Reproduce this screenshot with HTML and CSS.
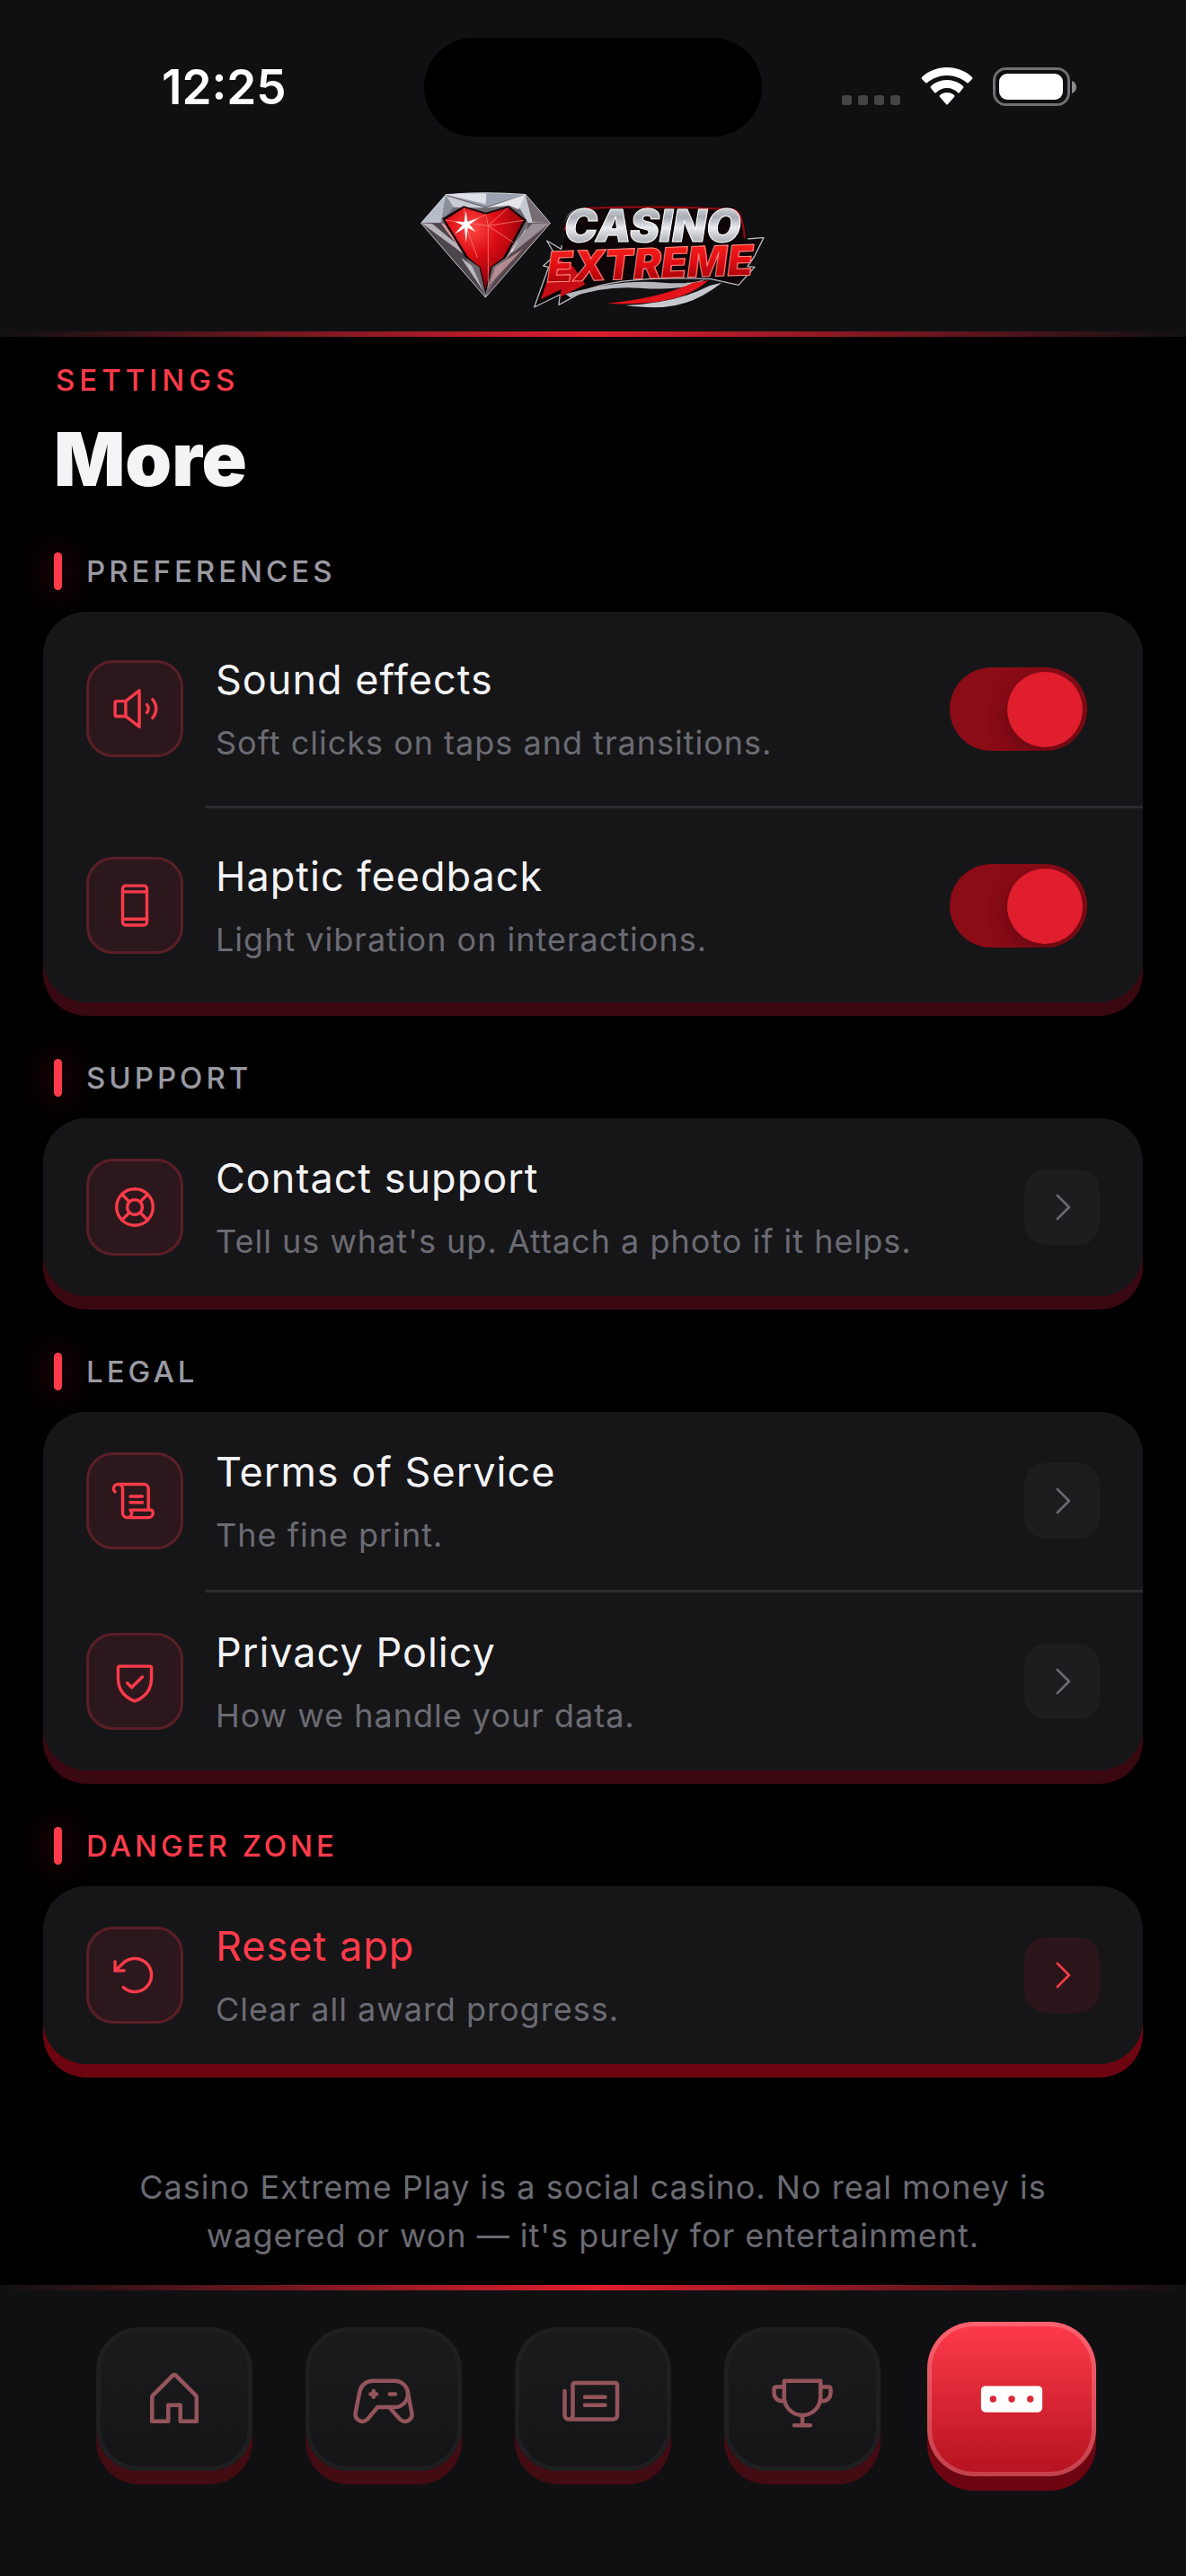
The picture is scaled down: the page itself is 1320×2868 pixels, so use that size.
FILE: index.html
```html
<!DOCTYPE html>
<html lang="en">
<head>
	<meta charset="utf-8" />
	<meta name="viewport" content="width=device-width, initial-scale=1.0" />
	<title>More</title>
	<link rel="stylesheet" href="styles.css">
</head>
<body>
	<header class="header">
		<div class="status">
			<span class="time">12:25</span>
			<span class="island"></span>
			<div class="statusIcons">
				<svg width="66" height="44" viewBox="0 0 66 44" fill="#444446">
					<rect x="0" y="31" width="11" height="11" rx="3" />
					<rect x="18" y="31" width="11" height="11" rx="3" />
					<rect x="36" y="31" width="11" height="11" rx="3" />
					<rect x="54" y="31" width="11" height="11" rx="3" />
				</svg>
				<svg width="58" height="44" viewBox="0 0 58 44" fill="#fff">
					<path d="M29,0C40,0 50,4 57,11Q58,12 57,13L53,17Q52,18 51,17C45,12 37,9 29,9S13,12 7,17Q6,18 5,17L1,13Q0,12 1,11C8,4 18,0 29,0Z" />
					<path d="M29,14C36,14 43,17 47,21Q48,22 47,23L43,28Q42,29 41,28C38,25 34,23 29,23S20,25 17,28Q16,29 15,28L11,23Q10,22 11,21C15,17 22,14 29,14Z" />
					<path d="M29,28C32,28 35,29 37,31Q38,32 37,33L30,41Q29,42 28,41L21,33Q20,32 21,31C23,29 26,28 29,28Z" />
				</svg>
				<svg width="94" height="44" viewBox="0 0 94 44">
					<rect x="1.5" y="1.5" width="83" height="40" rx="13" fill="none" stroke="#707072" stroke-width="3" />
					<rect x="7" y="7" width="71" height="29" rx="9" fill="#fff" />
					<path d="M88,15q5,2 5,7t-5,7z" fill="#8a8a8c" />
				</svg>
			</div>
		</div>
		<svg class="logo" viewBox="90 72 1152 396" role="img" aria-label="Casino Extreme">
			<defs>
				<linearGradient id="silver" x1="0" y1="0" x2="0" y2="1">
					<stop offset="0" stop-color="#f4f5f8" />
					<stop offset=".35" stop-color="#a9acb4" />
					<stop offset=".55" stop-color="#e9ebef" />
					<stop offset="1" stop-color="#80838c" />
				</linearGradient>
				<linearGradient id="ruby" x1="0" y1="0" x2="0" y2="1">
					<stop offset="0" stop-color="#ff2a22" />
					<stop offset=".5" stop-color="#e00d12" />
					<stop offset="1" stop-color="#8e0008" />
				</linearGradient>
				<radialGradient id="heart" cx=".35" cy=".25" r=".8">
					<stop offset="0" stop-color="#ff4a44" />
					<stop offset=".4" stop-color="#dd0d14" />
					<stop offset="1" stop-color="#7c0008" />
				</radialGradient>
			</defs>
			<!-- diamond -->
			<path d="M93,175L176,80Q308,70 440,80L522,175L307,422Z" fill="#6d6870" stroke="#e6e6ea" stroke-width="4" stroke-linejoin="round" />
			<path d="M176,80L93,175H158Z" fill="#b6bcc8" />
			<path d="M176,80L158,175L200,122Z" fill="#8a8f9a" />
			<path d="M176,80Q308,70 440,80L308,120Z" fill="#9ba3b2" />
			<path d="M176,80Q240,74 310,76L308,112Z" fill="#dde0e6" />
			<path d="M176,84L306,124L280,124L200,122Z" fill="#c9ccd4" />
			<path d="M440,80L522,175H450L418,120Z" fill="#c4c8d0" />
			<path d="M440,80L464,172L522,175Z" fill="#786c74" />
			<path d="M440,80L310,124L386,116L418,130Z" fill="#e4e6ea" />
			<path d="M93,175H158L232,275L307,422Z" fill="#4c454c" />
			<path d="M93,175L250,290L232,262L130,178Z" fill="#b7b3ba" />
			<path d="M158,175L170,180L232,268L222,262Z" fill="#e99aa0" />
			<path d="M225,290L262,318L298,400Z" fill="#bdb9c0" />
			<path d="M522,175H450L392,268L307,422Z" fill="#57484f" />
			<path d="M522,175L396,275L384,262L462,178Z" fill="#9a8f97" />
			<path d="M450,178L440,200L372,298L396,270Z" fill="#f3f3f5" />
			<path d="M432,262L340,322L318,384Z" fill="#b48b92" />
			<path d="M162,160L234,118L308,140L384,118L444,165L375,290L330,322L307,412L286,322L240,290Z" fill="#160508" />
			<path d="M172,165L236,124L308,146L382,124L434,166L366,290L324,322L307,396L290,322L250,290Z" fill="url(#heart)" />
			<g fill="none" stroke="#ff7d78" stroke-width="3" opacity=".8">
				<path d="M172,165L316,184L434,166" />
				<path d="M236,124L240,180L308,146L316,184L382,124" />
				<path d="M240,180L280,290M316,184V390M316,184L400,240" />
			</g>
			<path d="M242,134L247,170L284,158L254,180L274,204L248,191L242,240L237,192L204,212L230,182L204,170L236,171Z" fill="#fff" />
			<!-- backing plate of the wordmark -->
			<path d="M570,190Q575,130 640,122Q900,112 1140,126Q1175,130 1180,228L1236,224L1204,288L1182,320L1206,322L1152,382L1060,362Q760,350 640,400L552,448L556,414L470,456L518,322L500,318L540,282L512,234L560,262Z" fill="#0d0507" stroke="#b9bac0" stroke-width="4" stroke-linejoin="round" />
			<path d="M562,250Q562,134 644,122Q900,112 1140,126Q1176,132 1178,232" fill="none" stroke="#101012" stroke-width="10" />
			<path d="M572,200Q582,134 644,126Q900,116 1136,130Q1166,136 1172,226" fill="none" stroke="#9c0810" stroke-width="6" />
			<path d="M574,412Q760,360 900,374Q990,380 1040,364Q980,404 820,392Q700,384 590,424Z" fill="#b5b6bb" />
			<path d="M712,444Q900,424 1000,374L1052,366Q980,430 860,440Q780,448 712,444Z" fill="#e3141a" />
			<path d="M774,450Q940,444 1056,384L1096,374Q1000,450 900,456Q830,458 774,450Z" fill="#c8c9ce" />
			<path d="M540,290L492,430L560,396L556,422L640,380L600,320Z" fill="#c90d14" />
			<text class="word silver" x="570" y="236">CASINO</text>
			<text class="word ruby" x="514" y="372" transform="rotate(-2 514 372)">EXTREME</text>
		</svg>
	</header>

	<main class="main">
		<p class="eyebrow">SETTINGS</p>
		<h1 class="pageTitle">More</h1>

		<section class="section">
			<h2 class="label">PREFERENCES</h2>
			<div class="card">
				<label class="row tall" for="sound">
					<span class="iconBox">
						<svg class="icon" viewBox="0 0 256 256">
							<path d="M80,168H32a8,8,0,0,1-8-8V96a8,8,0,0,1,8-8H80l72-56V224Z" />
							<path d="M80,88v80M192,107a32,32,0,0,1,0,42M222,80a72,72,0,0,1,0,96" />
						</svg>
					</span>
					<span class="text">
						<span class="name">Sound effects</span>
						<span class="des">Soft clicks on taps and transitions.</span>
					</span>
					<input class="switch" type="checkbox" id="sound" checked />
				</label>
				<label class="row tall" for="haptic">
					<span class="iconBox">
						<svg class="icon" viewBox="0 0 256 256">
							<rect x="64" y="24" width="128" height="208" rx="16" />
							<path d="M64,56H192M64,200H192" />
						</svg>
					</span>
					<span class="text">
						<span class="name">Haptic feedback</span>
						<span class="des">Light vibration on interactions.</span>
					</span>
					<input class="switch" type="checkbox" id="haptic" checked />
				</label>
			</div>
		</section>

		<section class="section">
			<h2 class="label">SUPPORT</h2>
			<div class="card">
				<a class="row" href="#support">
					<span class="iconBox">
						<svg class="icon" viewBox="0 0 256 256">
							<circle cx="128" cy="128" r="96" />
							<circle cx="128" cy="128" r="40" />
							<path d="M60,60l40,40M196,60l-40,40M60,196l40-40M196,196l-40-40" />
						</svg>
					</span>
					<span class="text">
						<span class="name">Contact support</span>
						<span class="des">Tell us what's up. Attach a photo if it helps.</span>
					</span>
					<span class="arrow"><svg viewBox="0 0 256 256"><path d="M96,48l80,80l-80,80" /></svg></span>
				</a>
			</div>
		</section>

		<section class="section">
			<h2 class="label">LEGAL</h2>
			<div class="card">
				<a class="row" href="#terms">
					<span class="iconBox">
						<svg class="icon solid" viewBox="0 0 256 256">
							<path d="M96,104a8,8,0,0,1,8-8h64a8,8,0,0,1,0,16H104A8,8,0,0,1,96,104Zm8,40h64a8,8,0,0,0,0-16H104a8,8,0,0,0,0,16Zm128,48a32,32,0,0,1-32,32H88a32,32,0,0,1-32-32V64a16,16,0,0,0-32,0c0,5.74,4.83,9.62,4.88,9.66h0A8,8,0,0,1,24,88a7.89,7.89,0,0,1-4.79-1.61h0C18.05,85.54,8,77.61,8,64A32,32,0,0,1,40,32H176a32,32,0,0,1,32,32V168h8a8,8,0,0,1,4.8,1.6C222,170.46,232,178.39,232,192ZM96.26,173.48A8.07,8.07,0,0,1,104,168h88V64a16,16,0,0,0-16-16H67.69A31.71,31.71,0,0,1,72,64V192a16,16,0,0,0,32,0c0-5.74-4.83-9.62-4.88-9.66A7.82,7.82,0,0,1,96.26,173.48ZM216,192a12.58,12.58,0,0,0-3.23-8h-94a26.92,26.92,0,0,1,1.21,8,31.82,31.82,0,0,1-4.29,16H200A16,16,0,0,0,216,192Z" />
						</svg>
					</span>
					<span class="text">
						<span class="name">Terms of Service</span>
						<span class="des">The fine print.</span>
					</span>
					<span class="arrow"><svg viewBox="0 0 256 256"><path d="M96,48l80,80l-80,80" /></svg></span>
				</a>
				<a class="row" href="#privacy">
					<span class="iconBox">
						<svg class="icon" viewBox="0 0 256 256">
							<path d="M216,112V56a8,8,0,0,0-8-8H48a8,8,0,0,0-8,8v56c0,96,88,120,88,120S216,208,216,112Z" />
							<path d="M88,136l24,24l56-56" />
						</svg>
					</span>
					<span class="text">
						<span class="name">Privacy Policy</span>
						<span class="des">How we handle your data.</span>
					</span>
					<span class="arrow"><svg viewBox="0 0 256 256"><path d="M96,48l80,80l-80,80" /></svg></span>
				</a>
			</div>
		</section>

		<section class="section danger">
			<h2 class="label">DANGER ZONE</h2>
			<div class="card">
				<button class="row" type="button">
					<span class="iconBox">
						<svg class="icon" viewBox="0 0 256 256">
							<path d="M72,104H24V56" />
							<path d="M67.6,192A88,88,0,1,0,65.8,65.8L24,104" />
						</svg>
					</span>
					<span class="text">
						<span class="name">Reset app</span>
						<span class="des">Clear all award progress.</span>
					</span>
					<span class="arrow"><svg viewBox="0 0 256 256"><path d="M96,48l80,80l-80,80" /></svg></span>
				</button>
			</div>
		</section>

		<p class="note">Casino Extreme Play is a social casino. No real money is wagered or won — it's purely for entertainment.</p>
	</main>

	<nav class="nav">
		<a class="tab" href="#home" aria-label="Home">
			<span class="key">
				<svg viewBox="0 0 256 256">
					<path d="M104,216V152h48v64h64V120a8,8,0,0,0-2.3-5.7l-80-80a8,8,0,0,0-11.4,0l-80,80A8,8,0,0,0,40,120v96Z" />
				</svg>
			</span>
		</a>
		<a class="tab" href="#games" aria-label="Games">
			<span class="key">
				<svg viewBox="0 0 256 256">
					<path d="M172,56H84a52,52,0,0,0-51,43L16.4,183.8A28,28,0,0,0,63.8,208L104,160H172A52,52,0,0,0,172,56Z" />
					<path d="M223.2,99L239.6,183.8A28,28,0,0,1,192.2,208L150,160M152,108h22M76,108h24M88,96v24" />
				</svg>
			</span>
		</a>
		<a class="tab" href="#news" aria-label="News">
			<span class="key">
				<svg viewBox="0 0 256 256">
					<path d="M32,208a16,16,0,0,0,16-16V72a8,8,0,0,1,8-8H216a8,8,0,0,1,8,8V192a16,16,0,0,1-16,16H32a16,16,0,0,1-16-16V96" />
					<path d="M96,120h80M96,152h80" />
				</svg>
			</span>
		</a>
		<a class="tab" href="#awards" aria-label="Awards">
			<span class="key">
				<svg viewBox="0 0 256 256">
					<path d="M56,56H200v62c0,42-32,74-72,74s-72-32-72-74Z" />
					<path d="M198,136H208a32,32,0,0,0,32-32V88a8,8,0,0,0-8-8H200M58,136H48a32,32,0,0,1-32-32V88a8,8,0,0,1,8-8H56M128,192v40M96,232h64" />
				</svg>
			</span>
		</a>
		<a class="tab active" href="#more" aria-label="More">
			<span class="key">
				<svg viewBox="0 0 256 256">
					<path d="M224,80H32A16,16,0,0,0,16,96v64a16,16,0,0,0,16,16H224a16,16,0,0,0,16-16V96A16,16,0,0,0,224,80ZM60,140a12,12,0,1,1,12-12A12,12,0,0,1,60,140Zm68,0a12,12,0,1,1,12-12A12,12,0,0,1,128,140Zm68,0a12,12,0,1,1,12-12A12,12,0,0,1,196,140Z" />
				</svg>
			</span>
		</a>
	</nav>
</body>
</html>
```
FILE: styles.css
```css
*{
	margin: 0;
	padding: 0;
	box-sizing: border-box;
}
body{
	min-height: 100vh;
	display: flex;
	flex-direction: column;
	background: #000000;
	color: #f4f4f6;
	font-family: Inter, "Liberation Sans", sans-serif;
}
svg{
	display: block;
	flex: none;
}
a{
	color: inherit;
	text-decoration: none;
}

/* header */
.header{
	background: #101012;
	padding-top: 42px;
}
.header::after,
.nav::before{
	content: '';
	display: block;
	height: 6px;
	background: linear-gradient(90deg, rgba(224,30,46,0), #e01e2e 50%, rgba(224,30,46,0));
}
.status{
	display: grid;
	grid-template-columns: 1fr 376px 1fr;
	align-items: center;
}
.time{
	padding-left: 180px;
	font-size: 53px;
	line-height: 60px;
	font-weight: 600;
	color: #ffffff;
}
.island{
	height: 110px;
	border-radius: 55px;
	background: #000000;
}
.statusIcons{
	display: flex;
	justify-content: flex-end;
	gap: 22px;
	padding-right: 121px;
}
.logo{
	width: 384px;
	height: 132px;
	margin: 62px auto 23px;
}
.word{
	font-family: Inter, "Liberation Sans", sans-serif;
	font-weight: 900;
	font-style: italic;
	stroke-width: 3px;
}
.silver{
	font-size: 148px;
	fill: url(#silver);
	stroke: #ffffff;
}
.ruby{
	font-size: 140px;
	fill: url(#ruby);
	stroke: #ff8a84;
}

/* content */
.main{
	flex: 1;
	padding: 27px 48px 28px;
}
.eyebrow{
	padding-left: 14px;
	font-size: 33px;
	line-height: 42px;
	font-weight: 500;
	letter-spacing: 5px;
	color: #ff3b4b;
}
.pageTitle{
	margin: 19px 0 56px;
	padding-left: 12px;
	font-size: 83px;
	line-height: 96px;
	font-weight: 900;
}
.section{
	margin-bottom: 63px;
}
.label{
	display: flex;
	align-items: center;
	gap: 27px;
	padding-left: 12px;
	margin-bottom: 24px;
	font-size: 33px;
	line-height: 42px;
	font-weight: 500;
	letter-spacing: 4px;
	color: #9a9aa3;
}
.label::before{
	content: '';
	width: 9px;
	height: 42px;
	border-radius: 5px;
	background: #ff3b4b;
	box-shadow: 0 0 36px rgba(255,30,50,0.5);
}
.card{
	position: relative;
	background: #161618;
	border-radius: 48px;
	box-shadow: 0 15px 0 #3a0810;
}
.row{
	width: 100%;
	display: flex;
	align-items: center;
	gap: 36px;
	padding: 37px 48px;
	border: 0;
	background: none;
	color: inherit;
	font: inherit;
	text-align: left;
}
.row.tall{
	padding: 46px 48px;
}
.row + .row{
	margin-top: 3px;
}
/* divider, sits in the gap above the row */
.row + .row::before{
	content: '';
	position: absolute;
	left: 180px;
	right: 0;
	height: 3px;
	align-self: flex-start;
	background: #2c2c2f;
	transform: translateY(-40px);
}
.row.tall + .row::before{
	transform: translateY(-49px);
}
.iconBox{
	flex: none;
	width: 108px;
	height: 108px;
	display: grid;
	place-items: center;
	border: 3px solid #5a1f28;
	border-radius: 30px;
	background: #2c181c;
}
.icon{
	width: 54px;
	height: 54px;
	fill: none;
	stroke: #ff3b4b;
	stroke-width: 16;
	stroke-linecap: round;
	stroke-linejoin: round;
}
.icon.solid{
	fill: #ff3b4b;
	stroke: none;
}
.text{
	flex: 1;
	display: flex;
	flex-direction: column;
	gap: 16px;
}
.name{
	font-size: 45px;
	line-height: 60px;
	letter-spacing: 1px;
}
.des{
	font-size: 36px;
	line-height: 48px;
	letter-spacing: 1px;
	color: #6b6b73;
}
.switch{
	appearance: none;
	flex: none;
	width: 153px;
	height: 93px;
	margin-right: 14px;
	padding: 5px;
	border-radius: 47px;
	background: #4a4a4e;
	overflow: hidden;
	display: flex;
}
.switch::before{
	content: '';
	width: 84px;
	height: 84px;
	border-radius: 50%;
	background: #e01e2e;
	box-shadow: 0 8px 24px rgba(0,0,0,0.3);
}
.switch:checked{
	justify-content: flex-end;
	background: #8b0b16;
}
.arrow{
	flex: none;
	width: 84px;
	height: 84px;
	display: grid;
	place-items: center;
	border-radius: 24px;
	background: #1d1d1f;
	color: #6b6b73;
}
.arrow svg{
	width: 42px;
	height: 42px;
	fill: none;
	stroke: currentColor;
	stroke-width: 16;
	stroke-linecap: round;
	stroke-linejoin: round;
}
.danger{
	margin-bottom: 110px;
}
.danger .label,
.danger .name{
	color: #ff3b4b;
}
.danger .card{
	box-shadow: 0 15px 0 #6c0510;
}
.danger .arrow{
	background: #2c151a;
	color: #ff3b4b;
}
.note{
	padding: 0 96px;
	font-size: 36px;
	line-height: 54px;
	letter-spacing: 1px;
	text-align: center;
	color: #6b6b73;
}

/* bottom bar */
.nav{
	display: grid;
	grid-template-columns: 78px repeat(5, 1fr) 78px;
	align-items: center;
	padding-bottom: 111px;
	background: #101012;
}
.nav::before{
	grid-column: 1 / -1;
	margin-bottom: 35px;
}
.tab{
	display: grid;
	place-items: center;
}
.tab:first-of-type{
	grid-column: 2;
}
.key{
	width: 174px;
	height: 160px;
	display: grid;
	place-items: center;
	border: 5px solid #1f1f21;
	border-radius: 48px;
	background: linear-gradient(#1b1b1d, #151517);
	box-shadow: 0 15px 0 #430b12;
}
.key svg{
	width: 72px;
	height: 72px;
	fill: none;
	stroke: #94545b;
	stroke-width: 16;
	stroke-linecap: round;
	stroke-linejoin: round;
}
.active .key{
	width: 188px;
	height: 172px;
	border-color: rgba(255,255,255,0.2);
	border-radius: 52px;
	background: linear-gradient(#ff3b4b, #b5121f) border-box;
	box-shadow: 0 16px 0 #6c0510;
}
.active .key svg{
	width: 78px;
	height: 78px;
	fill: #ffffff;
	stroke: none;
}
```
